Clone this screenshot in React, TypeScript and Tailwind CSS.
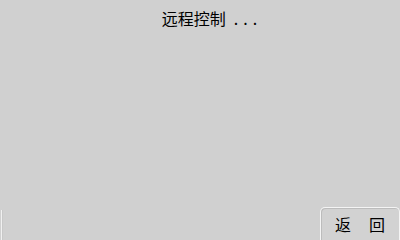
export default function App() {
  return (
    <div
      className="flex h-[240px] w-[400px] flex-col bg-[#d0d0d0] text-black"
      style={{ fontFamily: '"Noto Sans CJK SC", "DejaVu Sans", sans-serif' }}
    >
      {/* Title */}
      <div className="flex h-[36px] items-center justify-center pl-[24px] text-[16px] leading-none">
        <span>远程控制</span>
        <span className="ml-[8px] tracking-[5px]">...</span>
      </div>

      <div className="flex-1" />

      {/* Bottom bar */}
      <div className="flex h-[33px] items-end justify-between">
        <div className="ml-[1px] h-[30px] w-[2px] border-l border-[#f0f0f0] bg-[#c8c8c8]" />
        <button className="flex h-[33px] w-[80px] items-center justify-center gap-[18px] rounded-t-[5px] border-l border-t border-r border-[#f4f4f4] bg-[#d2d2d2] pb-[1px] text-[16px] leading-none shadow-[inset_1px_1px_0_#bcbcbc]">
          <span>返</span>
          <span>回</span>
        </button>
      </div>
    </div>
  );
}
